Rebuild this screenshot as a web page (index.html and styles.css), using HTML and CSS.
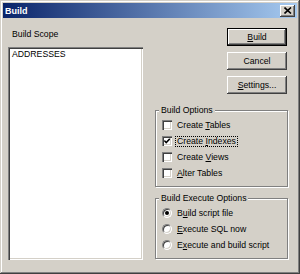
FILE: index.html
```html
<!DOCTYPE html>
<html lang="en">
<head>
    <meta charset="UTF-8">
    <title>Build</title>
    <link rel="stylesheet" href="styles.css">
</head>
<body>
    <div class="dialog">
        <div class="title-bar">
            <span class="title">Build</span>
            <span class="close">
                <svg width="8" height="7" viewBox="0 0 8 7"><path d="M0.5 0.5 L7 6.5 M7 0.5 L0.5 6.5" stroke="#000" stroke-width="1.6"/></svg>
            </span>
        </div>

        <div class="main">
            <div class="scope">
                <div class="scope-label">Build Scope</div>
                <div class="list">
                    <div class="list-item">ADDRESSES</div>
                </div>
            </div>

            <div class="side">
                <div class="buttons">
                    <button type="button" class="btn default"><u>B</u>uild</button>
                    <button type="button" class="btn">Cancel</button>
                    <button type="button" class="btn"><u>S</u>ettings...</button>
                </div>

                <div class="group options">
                    <span class="group-title">Build Options</span>
                    <div class="rows">
                        <div class="option"><span class="check"></span><span>Create <u>T</u>ables</span></div>
                        <div class="option"><span class="check">
                            <svg width="6" height="6" viewBox="0 0 6 6"><path d="M0.3 2.6 L2.2 4.6 L5.8 0.8" stroke="#000" stroke-width="1.5" fill="none"/></svg>
                        </span><span class="focused">Create <u>I</u>ndexes</span></div>
                        <div class="option"><span class="check"></span><span>Create <u>V</u>iews</span></div>
                        <div class="option"><span class="check"></span><span><u>A</u>lter Tables</span></div>
                    </div>
                </div>

                <div class="group execute">
                    <span class="group-title">Build Execute Options</span>
                    <div class="rows">
                        <div class="option"><span class="radio selected"></span><span>B<u>u</u>ild script file</span></div>
                        <div class="option"><span class="radio"></span><span><u>E</u>xecute SQL now</span></div>
                        <div class="option"><span class="radio"></span><span>E<u>x</u>ecute and build script</span></div>
                    </div>
                </div>
            </div>
        </div>
    </div>
</body>
</html>
```

FILE: styles.css
```css
* {
    box-sizing: border-box;
}

body {
    margin: 0;
    font-family: "Liberation Sans", Arial, sans-serif;
    font-size: 8.7px;
    color: #000;
    background: #d4d0c8;
}

.dialog {
    width: 300px;
    height: 274px;
    padding: 3px;
    background: #d4d0c8;
    box-shadow: inset -1px -1px #404040, inset 1px 1px #d4d0c8,
                inset -2px -2px #808080, inset 2px 2px #fff;
    display: flex;
    flex-direction: column;
}

.title-bar {
    height: 15px;
    display: flex;
    align-items: center;
    justify-content: space-between;
    padding: 0 2px 0 2px;
    background: linear-gradient(to right, #0a246a, #a6caf0);
}

.title {
    color: #fff;
    font-weight: bold;
    font-size: 9px;
}

.close {
    width: 15px;
    height: 12px;
    display: flex;
    align-items: center;
    justify-content: center;
    background: #d4d0c8;
    box-shadow: inset -1px -1px #404040, inset 1px 1px #fff,
                inset -2px -2px #808080, inset 2px 2px #d4d0c8;
}

.close svg {
    display: block;
}

.main {
    flex: 1;
    display: flex;
    gap: 12px;
    padding: 10px 9px 0 5px;
}

.scope {
    width: 135px;
    display: flex;
    flex-direction: column;
}

.scope-label {
    line-height: 12px;
    margin: 0 0 7px 4px;
}

.list {
    height: 213px;
    padding: 2px 4px;
    background: #fff;
    line-height: 11px;
    box-shadow: inset 1px 1px #808080, inset 2px 2px #404040,
                inset -1px -1px #fff, inset -2px -2px #d4d0c8;
}

.side {
    width: 133px;
    display: flex;
    flex-direction: column;
}

.buttons {
    display: flex;
    flex-direction: column;
    align-items: flex-end;
    gap: 6px;
    padding-right: 1px;
}

.btn {
    width: 60px;
    height: 18px;
    padding: 0;
    border: none;
    font: inherit;
    color: #000;
    background: #d4d0c8;
    box-shadow: inset -1px -1px #404040, inset 1px 1px #fff,
                inset -2px -2px #808080, inset 2px 2px #d4d0c8;
}

.btn.default {
    border: 1px solid #000;
}

.group {
    display: flex;
    flex-direction: column;
    align-items: flex-start;
    padding: 0 0 5px 3px;
    border: 1px solid #808080;
    box-shadow: 1px 1px #fff, inset 1px 1px #fff;
}

.group.options {
    margin-top: 16px;
    height: 77px;
}

.group.execute {
    margin-top: 11px;
    height: 61px;
}

.group-title {
    margin-top: -6px;
    padding: 0 2px;
    line-height: 11px;
    background: #d4d0c8;
}

.rows {
    margin-top: 1px;
}

.option {
    height: 16px;
    display: flex;
    align-items: center;
    gap: 5px;
    padding-left: 3px;
    white-space: nowrap;
}

.check {
    width: 10px;
    height: 10px;
    display: flex;
    align-items: center;
    justify-content: center;
    background: #fff;
    box-shadow: inset 1px 1px #808080, inset 2px 2px #404040,
                inset -1px -1px #fff, inset -2px -2px #d4d0c8;
}

.check svg {
    display: block;
}

.radio {
    width: 10px;
    height: 10px;
    border-radius: 50%;
    display: flex;
    align-items: center;
    justify-content: center;
    background: #fff;
    border: 1px solid;
    border-color: #808080 #fff #fff #808080;
    box-shadow: inset 1px 1px #404040, inset -1px -1px #d4d0c8;
}

.radio.selected::after {
    content: "";
    width: 4px;
    height: 4px;
    border-radius: 50%;
    background: #000;
}

.focused {
    margin-left: -1px;
    padding: 0 1px;
    line-height: 9px;
    outline: 1px dotted #000;
}
```
